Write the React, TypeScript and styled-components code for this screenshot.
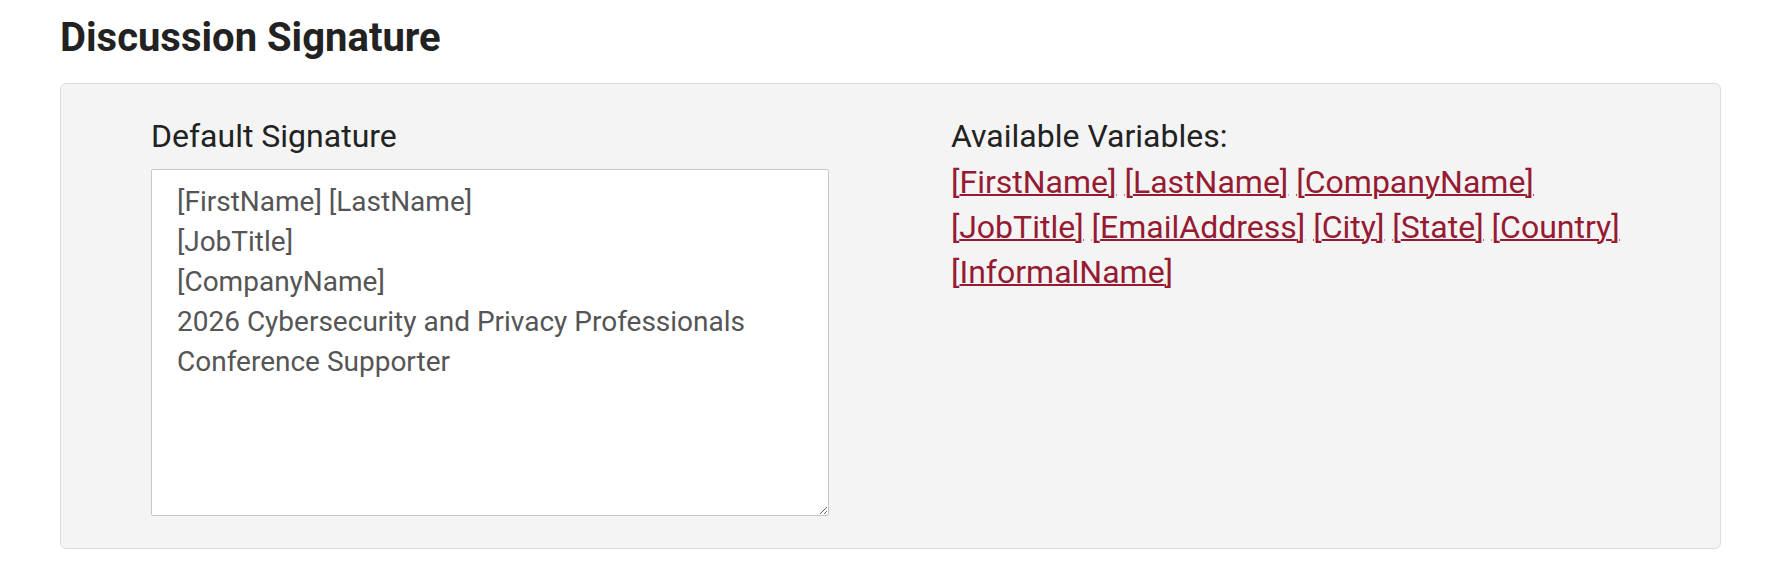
import React from "react";
import styled, { createGlobalStyle } from "styled-components";

const GlobalStyle = createGlobalStyle`
  body {
    margin: 0;
    background: #ffffff;
    font-family: Roboto, "Liberation Sans", sans-serif;
  }
`;

const Page = styled.div`
  padding: 14px 59px 0 60px;
`;

const Heading = styled.h2`
  margin: 0 0 21px;
  font-size: 40px;
  font-weight: 700;
  color: #222222;
  line-height: 48px;
`;

const Panel = styled.div`
  background: #f4f4f4;
  border: 1px solid #dddddd;
  border-radius: 6px;
  padding: 32px 90px 32px;
  display: grid;
  grid-template-columns: 678px 1fr;
  column-gap: 122px;
`;

const Column = styled.div`
  display: flex;
  flex-direction: column;
`;

const Label = styled.label<{ $gap: number }>`
  font-size: 32px;
  line-height: 40px;
  color: #222222;
  margin-bottom: ${({ $gap }) => $gap}px;
`;

const SignatureBox = styled.textarea`
  box-sizing: border-box;
  width: 678px;
  height: 347px;
  padding: 12px 25px;
  border: 1px solid #c8c8c8;
  border-radius: 2px;
  background: #ffffff;
  font-family: Roboto, "Liberation Sans", sans-serif;
  font-size: 28px;
  line-height: 40px;
  color: #555555;
  resize: vertical;
  outline: none;
`;

const Variables = styled.div`
  font-size: 32px;
  line-height: 45px;
`;

const VarLink = styled.a`
  color: #961b32;
  text-decoration: underline;
  text-decoration-thickness: 2px;
  cursor: pointer;
`;

const variables = [
  "FirstName",
  "LastName",
  "CompanyName",
  "JobTitle",
  "EmailAddress",
  "City",
  "State",
  "Country",
  "InformalName",
];

const signature = `[FirstName] [LastName]
[JobTitle]
[CompanyName]
2026 Cybersecurity and Privacy Professionals Conference Supporter`;

const App: React.FC = () => {
  return (
    <>
      <GlobalStyle />
      <Page>
        <Heading>Discussion Signature</Heading>
        <Panel>
          <Column>
            <Label htmlFor="sig" $gap={13}>Default Signature</Label>
            <SignatureBox id="sig" defaultValue={signature} />
          </Column>
          <Column>
            <Label as="div" $gap={4}>Available Variables:</Label>
            <Variables>
              {variables.map((v, i) => (
                <React.Fragment key={v}>
                  <VarLink>[{v}]</VarLink>
                  {i < variables.length - 1 ? " " : null}
                </React.Fragment>
              ))}
            </Variables>
          </Column>
        </Panel>
      </Page>
    </>
  );
};

export default App;
